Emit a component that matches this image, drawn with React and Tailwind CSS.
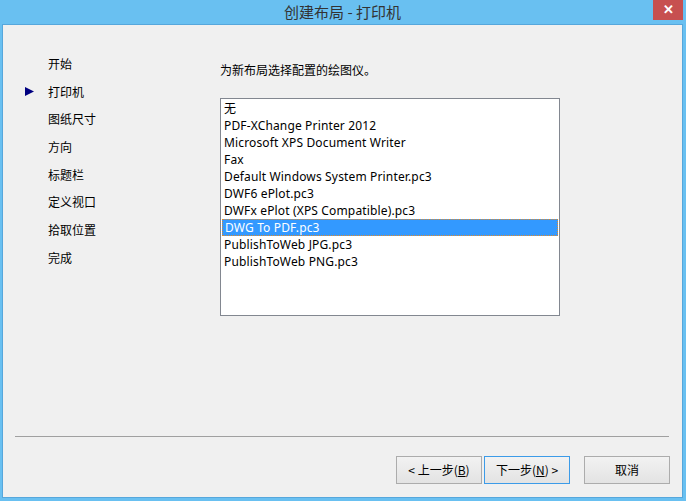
const pasos = ["开始", "打印机", "图纸尺寸", "方向", "标题栏", "定义视口", "拾取位置", "完成"];

const plotters = [
    "无",
    "PDF-XChange Printer 2012",
    "Microsoft XPS Document Writer",
    "Fax",
    "Default Windows System Printer.pc3",
    "DWF6 ePlot.pc3",
    "DWFx ePlot (XPS Compatible).pc3",
    "DWG To PDF.pc3",
    "PublishToWeb JPG.pc3",
    "PublishToWeb PNG.pc3",
];

function Boton({ children, activo }) {
    return (
        <button
            className={`h-[28px] w-[86px] border bg-gradient-to-b from-[#f2f2f2] to-[#e3e3e3] text-[12px] text-black ${activo ? "border-[#3c9be8]" : "border-[#acacac]"}`}
        >
            {children}
        </button>
    );
}

export default function App() {
    return (
        <div
            className="flex h-[501px] w-[686px] flex-col bg-[#69c0f1] pb-[3px] pl-[2px] pr-[3px]"
            style={{ fontFamily: '"Noto Sans", "Noto Sans CJK SC", sans-serif' }}
        >
            {/* titulo */}
            <div className="relative flex h-[24px] items-center justify-center">
                <span className="text-[15px] text-[#333333]" style={{ fontFamily: '"Noto Sans CJK SC", sans-serif' }}>
                    创建布局 - 打印机
                </span>
                <div className="absolute right-[0px] top-0 flex h-[20px] w-[30px] items-center justify-center bg-[#c75050] text-[13px] font-bold text-white">
                    ✕
                </div>
            </div>

            {/* cliente */}
            <div className="flex flex-1 flex-col border border-[#56a7dc] bg-[#f0f0f0] text-[12px] text-black">
                <div className="flex h-[411px]">
                    {/* pasos */}
                    <div className="w-[217px] pt-[25px]" style={{ fontFamily: '"Noto Sans CJK SC", sans-serif' }}>
                        {pasos.map((p, i) => (
                            <div key={i} className="flex h-[27.7px] items-center">
                                <div className="flex w-[45px] justify-start pl-[22px]">
                                    {i === 1 && (
                                        <svg width="9" height="9" viewBox="0 0 9 9">
                                            <polygon points="0,0 9,4.5 0,9" fill="#000080" />
                                        </svg>
                                    )}
                                </div>
                                <span>{p}</span>
                            </div>
                        ))}
                    </div>

                    {/* contenido */}
                    <div className="flex flex-col pt-[37px]">
                        <div className="h-[16px] leading-[16px]" style={{ fontFamily: '"Noto Sans CJK SC", sans-serif' }}>
                            为新布局选择配置的绘图仪。
                        </div>
                        <div className="mt-[20px] h-[218px] w-[340px] border border-[#828790] bg-white p-[1px] tracking-[0.15px]">
                            {plotters.map((p, i) => (
                                <div
                                    key={i}
                                    className={`flex h-[17px] items-center pl-[2px] leading-[17px] ${i === 7 ? "border border-dotted border-[#e08a2c] bg-[#3399ff] pl-[1px] text-white" : ""}`}
                                >
                                    {p}
                                </div>
                            ))}
                        </div>
                    </div>
                </div>

                {/* separador */}
                <div className="ml-[12px] mr-[13px] h-[1px] bg-[#a0a0a0]" />

                {/* botones */}
                <div className="mt-[19px] flex justify-end pr-[12px]" style={{ fontFamily: '"Noto Sans CJK SC", sans-serif' }}>
                    <Boton>&lt; 上一步(<span className="underline">B</span>)</Boton>
                    <div className="w-[2px]" />
                    <Boton activo>下一步(<span className="underline">N</span>) &gt;</Boton>
                    <div className="w-[14px]" />
                    <Boton>取消</Boton>
                </div>
            </div>
        </div>
    );
}
